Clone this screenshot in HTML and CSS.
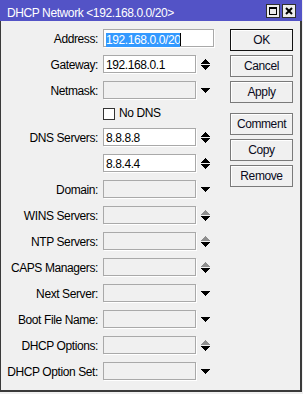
FILE: index.html
```html
<!DOCTYPE html>
<html>
<head>
<meta charset="utf-8">
<title>DHCP Network</title>
<link rel="stylesheet" href="styles.css">
</head>
<body>
<div class="window">
  <div class="titlebar">
    <span class="title">DHCP Network &lt;192.168.0.0/20&gt;</span>
    <div class="tbtns">
      <span class="tbtn"><svg width="12" height="12" viewBox="0 0 12 12" shape-rendering="crispEdges"><rect x="2" y="2" width="8" height="2" fill="#000"/><rect x="2.5" y="2.5" width="7" height="7" fill="none" stroke="#000" stroke-width="1"/></svg></span>
      <span class="tbtn"><svg width="12" height="12" viewBox="0 0 12 12"><path d="M3 3L9 9M9 3L3 9" stroke="#000" stroke-width="2" fill="none"/></svg></span>
    </div>
  </div>
  <div class="content">
    <div class="form">
      <span class="lbl">Address:</span>
      <div class="inp wide"><span class="sel">192.168.0.0/20</span><span class="caret"></span></div>

      <span class="lbl">Gateway:</span>
      <div class="inp">192.168.0.1</div>
      <svg class="arr" width="9" height="11" viewBox="0 0 9 11"><path d="M4 0h1v1H4zM3 1h3v1H3zM2 2h5v1H2zM1 3h7v1H1zM0 4h9v1H0z" fill="#000"/><path d="M0 6h9v1H0zM1 7h7v1H1zM2 8h5v1H2zM3 9h3v1H3zM4 10h1v1H4z" fill="#000"/></svg>

      <span class="lbl">Netmask:</span>
      <div class="inp dis"></div>
      <svg class="arr" width="9" height="5" viewBox="0 0 9 5"><path d="M0 0h9v1H0zM1 1h7v1H1zM2 2h5v1H2zM3 3h3v1H3zM4 4h1v1H4z" fill="#000"/></svg>

      <span class="lbl"></span>
      <div class="check"><span class="box"></span><span>No DNS</span></div>

      <span class="lbl">DNS Servers:</span>
      <div class="inp">8.8.8.8</div>
      <svg class="arr" width="9" height="11" viewBox="0 0 9 11"><path d="M4 0h1v1H4zM3 1h3v1H3zM2 2h5v1H2zM1 3h7v1H1zM0 4h9v1H0z" fill="#000"/><path d="M0 6h9v1H0zM1 7h7v1H1zM2 8h5v1H2zM3 9h3v1H3zM4 10h1v1H4z" fill="#000"/></svg>

      <span class="lbl"></span>
      <div class="inp">8.8.4.4</div>
      <svg class="arr" width="9" height="11" viewBox="0 0 9 11"><path d="M4 0h1v1H4zM3 1h3v1H3zM2 2h5v1H2zM1 3h7v1H1zM0 4h9v1H0z" fill="#000"/><path d="M0 6h9v1H0zM1 7h7v1H1zM2 8h5v1H2zM3 9h3v1H3zM4 10h1v1H4z" fill="#000"/></svg>

      <span class="lbl">Domain:</span>
      <div class="inp dis"></div>
      <svg class="arr" width="9" height="5" viewBox="0 0 9 5"><path d="M0 0h9v1H0zM1 1h7v1H1zM2 2h5v1H2zM3 3h3v1H3zM4 4h1v1H4z" fill="#000"/></svg>

      <span class="lbl">WINS Servers:</span>
      <div class="inp dis"></div>
      <svg class="arr" width="9" height="11" viewBox="0 0 9 11"><path d="M4 0h1v1H4zM3 1h3v1H3zM2 2h5v1H2zM1 3h7v1H1zM0 4h9v1H0z" fill="#8f8f8f"/><path d="M0 6h9v1H0zM1 7h7v1H1zM2 8h5v1H2zM3 9h3v1H3zM4 10h1v1H4z" fill="#000"/></svg>

      <span class="lbl">NTP Servers:</span>
      <div class="inp dis"></div>
      <svg class="arr" width="9" height="11" viewBox="0 0 9 11"><path d="M4 0h1v1H4zM3 1h3v1H3zM2 2h5v1H2zM1 3h7v1H1zM0 4h9v1H0z" fill="#8f8f8f"/><path d="M0 6h9v1H0zM1 7h7v1H1zM2 8h5v1H2zM3 9h3v1H3zM4 10h1v1H4z" fill="#000"/></svg>

      <span class="lbl">CAPS Managers:</span>
      <div class="inp dis"></div>
      <svg class="arr" width="9" height="11" viewBox="0 0 9 11"><path d="M4 0h1v1H4zM3 1h3v1H3zM2 2h5v1H2zM1 3h7v1H1zM0 4h9v1H0z" fill="#8f8f8f"/><path d="M0 6h9v1H0zM1 7h7v1H1zM2 8h5v1H2zM3 9h3v1H3zM4 10h1v1H4z" fill="#000"/></svg>

      <span class="lbl">Next Server:</span>
      <div class="inp dis"></div>
      <svg class="arr" width="9" height="5" viewBox="0 0 9 5"><path d="M0 0h9v1H0zM1 1h7v1H1zM2 2h5v1H2zM3 3h3v1H3zM4 4h1v1H4z" fill="#000"/></svg>

      <span class="lbl">Boot File Name:</span>
      <div class="inp dis"></div>
      <svg class="arr" width="9" height="5" viewBox="0 0 9 5"><path d="M0 0h9v1H0zM1 1h7v1H1zM2 2h5v1H2zM3 3h3v1H3zM4 4h1v1H4z" fill="#000"/></svg>

      <span class="lbl">DHCP Options:</span>
      <div class="inp dis"></div>
      <svg class="arr" width="9" height="11" viewBox="0 0 9 11"><path d="M4 0h1v1H4zM3 1h3v1H3zM2 2h5v1H2zM1 3h7v1H1zM0 4h9v1H0z" fill="#8f8f8f"/><path d="M0 6h9v1H0zM1 7h7v1H1zM2 8h5v1H2zM3 9h3v1H3zM4 10h1v1H4z" fill="#000"/></svg>

      <span class="lbl">DHCP Option Set:</span>
      <div class="inp dis"></div>
      <svg class="arr" width="9" height="5" viewBox="0 0 9 5"><path d="M0 0h9v1H0zM1 1h7v1H1zM2 2h5v1H2zM3 3h3v1H3zM4 4h1v1H4z" fill="#000"/></svg>
    </div>
    <div class="buttons">
      <div class="btn def">OK</div>
      <div class="btn">Cancel</div>
      <div class="btn">Apply</div>
      <div class="btn gap">Comment</div>
      <div class="btn">Copy</div>
      <div class="btn">Remove</div>
    </div>
  </div>
</div>
</body>
</html>
```
FILE: styles.css
```css
html, body {
  margin: 0;
  padding: 0;
  background: #f0f0f0;
}
body {
  font-family: "Liberation Sans", Arial, sans-serif;
  font-size: 12px;
  letter-spacing: -0.4px;
  color: #000;
}
.window {
  width: 302px;
  height: 392px;
  display: flex;
  flex-direction: column;
}
.titlebar {
  flex: none;
  height: 21px;
  background: #5353c6;
  color: #fff;
  display: flex;
  align-items: flex-start;
  padding: 0 6px 0 7px;
}
.title {
  padding-top: 7px;
  line-height: 13px;
  white-space: nowrap;
}
.tbtns {
  margin-left: auto;
  margin-top: 4px;
  display: flex;
  gap: 2px;
}
.tbtn {
  width: 14px;
  height: 14px;
  box-sizing: border-box;
  border: 1px solid #2e2e2e;
  background: #ececec;
  display: flex;
  align-items: center;
  justify-content: center;
}
.tbtn svg { display: block; }
.content {
  flex: 1;
  display: flex;
  gap: 20px;
  border-style: solid;
  border-color: #3a3a3a;
  border-width: 0 2px 2px 1px;
  padding-top: 8px;
}
.form {
  display: grid;
  grid-template-columns: 97px 93px 9px;
  grid-template-rows: 18px 18px 18px 13px repeat(10, 18px);
  column-gap: 5px;
  row-gap: 8px;
  align-content: start;
}
.lbl {
  text-align: right;
  white-space: nowrap;
  padding-top: 4px;
  line-height: 13px;
  grid-column: 1;
  direction: rtl;
  unicode-bidi: plaintext;
}
.inp {
  grid-column: 2;
  height: 18px;
  box-sizing: border-box;
  border: 1px solid #a9a9a9;
  background: #fff;
  box-shadow: 1px 1px 0 #fff;
  padding: 3px 0 0 2px;
  line-height: 13px;
  white-space: nowrap;
}
.inp.wide {
  grid-column: 2 / span 2;
  width: 111px;
}
.inp.dis {
  background: #f0f0f0;
}
.sel {
  background: #3399ff;
  color: #fff;
}
.caret {
  display: inline-block;
  width: 1px;
  height: 13px;
  background: #000;
  vertical-align: -2px;
}
.arr {
  grid-column: 3;
  align-self: center;
  display: block;
}
.check {
  grid-column: 2 / span 2;
  display: flex;
  align-items: center;
  gap: 4px;
  line-height: 13px;
  white-space: nowrap;
}
.box {
  width: 12px;
  height: 12px;
  box-sizing: border-box;
  border: 1px solid #333;
  background: #fff;
}
.buttons {
  display: flex;
  flex-direction: column;
  gap: 4px;
  width: 63px;
}
.btn {
  height: 22px;
  box-sizing: border-box;
  border: 1px solid #7a7a7a;
  box-shadow: inset 1px 1px 0 #fff;
  background: #f0f0f0;
  text-align: center;
  line-height: 20px;
  color: #0a0a20;
}
.btn.def {
  border-color: #111;
}
.btn.gap {
  margin-top: 6px;
}
```
